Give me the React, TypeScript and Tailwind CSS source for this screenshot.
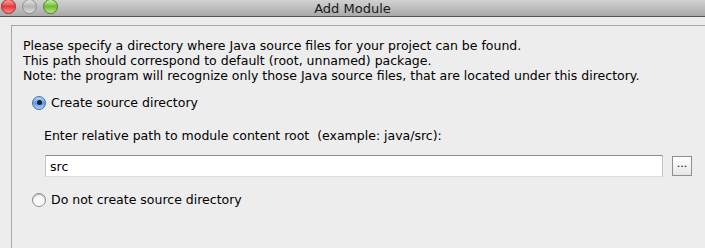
import { useState } from 'react';

function Radio({ checked }: { checked: boolean }) {
  return checked ? (
    <span className="relative flex h-[14px] w-[14px] shrink-0 items-center justify-center rounded-full border border-[#3d6fb0] bg-gradient-to-b from-[#b9d6f5] via-[#5f9ee3] to-[#a9d0f7]">
      <span className="h-[5px] w-[5px] rounded-full bg-[#0f1f33]" />
    </span>
  ) : (
    <span className="h-[14px] w-[14px] shrink-0 rounded-full border border-[#8a8a8a] bg-gradient-to-b from-[#f4f4f4] to-[#ffffff] shadow-[inset_0_1px_1px_rgba(0,0,0,0.25)]" />
  );
}

export default function App() {
  const [create, setCreate] = useState(true);
  const [path, setPath] = useState('src');

  return (
    <div className="h-[248px] w-[705px] overflow-hidden bg-[#ededed] text-[12.5px] leading-[15px] text-black" style={{ fontFamily: '"DejaVu Sans", sans-serif' }}>
      {/* title bar */}
      <div className="relative flex h-[17px] items-center justify-center border-b border-[#555555] bg-gradient-to-b from-[#d2d2d2] to-[#a9a9a9]">
        <div className="absolute left-[1px] top-[-1px] flex gap-[6px]">
          <span className="h-[15px] w-[15px] rounded-full border border-[#9b2a2a] bg-gradient-to-b from-[#ff9f9f] via-[#e5393a] to-[#ff8c8c]" />
          <span className="h-[15px] w-[15px] rounded-full border border-[#8e8e8e] bg-gradient-to-b from-[#e6e6e6] via-[#b4b4b4] to-[#dedede]" />
          <span className="h-[15px] w-[15px] rounded-full border border-[#4f7f23] bg-gradient-to-b from-[#cff1a4] via-[#6bbd2e] to-[#b9ea86]" />
        </div>
        <span className="text-[13px] leading-none text-[#1a1a1a]">Add Module</span>
      </div>

      <div className="pl-[11px] pt-[8px]">
        <div className="h-[230px] border-l border-t border-[#a6a6a6] pl-[11px] pt-[12px]">
          <div>
            <div>Please specify a directory where Java source files for your project can be found.</div>
            <div>This path should correspond to default (root, unnamed) package.</div>
            <div>Note: the program will recognize only those Java source files, that are located under this directory.</div>
          </div>

          <label className="mt-[12px] flex items-center gap-[5px] pl-[9px]" onClick={() => setCreate(true)}>
            <Radio checked={create} />
            <span>Create source directory</span>
          </label>

          <div className="mt-[18px] pl-[21px]">Enter relative path to module content root&nbsp; (example: java/src):</div>

          <div className="mt-[12px] flex items-center pl-[22px]">
            <input
              value={path}
              onChange={(e) => setPath(e.target.value)}
              className="h-[22px] w-[618px] border border-t-[#8c8c8c] border-l-[#c4c4c4] border-r-[#c4c4c4] border-b-[#dcdcdc] bg-white px-[4px] text-[12.5px] outline-none"
              style={{ fontFamily: '"DejaVu Sans", sans-serif' }}
            />
            <button className="ml-[9px] flex h-[20px] w-[20px] items-start justify-center border border-[#8f8f8f] bg-gradient-to-b from-[#ffffff] to-[#e6e6e6] text-[11px] leading-[14px]">
              ...
            </button>
          </div>

          <label className="mt-[15px] flex items-center gap-[5px] pl-[9px]" onClick={() => setCreate(false)}>
            <Radio checked={!create} />
            <span>Do not create source directory</span>
          </label>
        </div>
      </div>
    </div>
  );
}
